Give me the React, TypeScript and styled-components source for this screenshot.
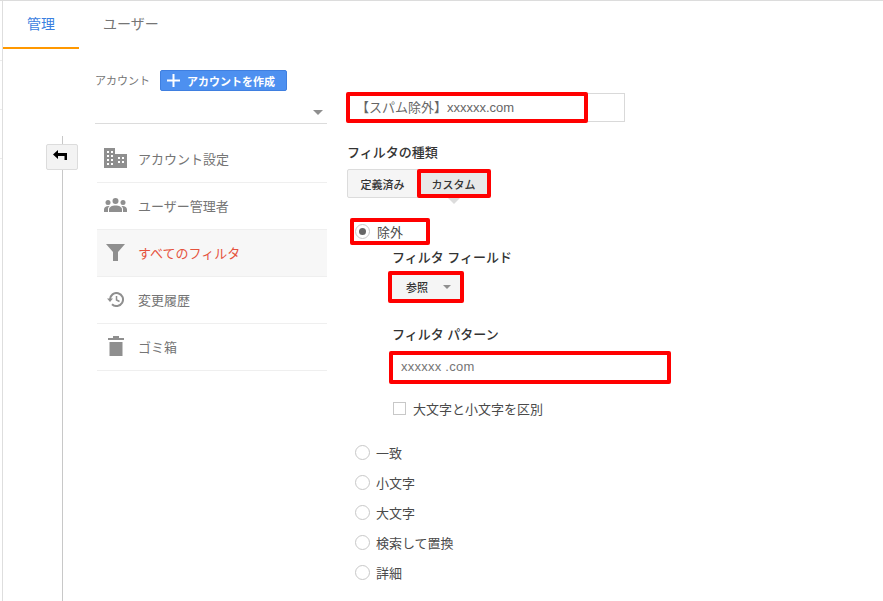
import React from 'react';
import styled, { createGlobalStyle } from 'styled-components';

const GlobalStyle = createGlobalStyle`
  html, body {
    margin: 0;
    padding: 0;
    background: #fff;
  }
  body, input, button {
    font-family: 'Liberation Sans', 'Noto Sans CJK JP', sans-serif;
  }
`;

const menuItems = [
  { label: 'アカウント設定', icon: <BuildingIcon /> },
  { label: 'ユーザー管理者', icon: <PeopleIcon /> },
  { label: 'すべてのフィルタ', icon: <FilterIcon />, active: true },
  { label: '変更履歴', icon: <HistoryIcon /> },
  { label: 'ゴミ箱', icon: <TrashIcon /> },
];

const otherTypes = ['一致', '小文字', '大文字', '検索して置換', '詳細'];

function BuildingIcon() {
  return (
    <svg width="23" height="20" viewBox="0 0 23 20">
      <path fill="#8f8f8f" fillRule="evenodd" d="M0 0h11v6h12v14H0zM3 3v2h2V3zm4 0v2h2V3zM3 7v2h2V7zm4 0v2h2V7zM3 11v2h2v-2zm4 0v2h2v-2zM3 15v2h2v-2zm4 0v2h2v-2zm7-6v2h2V9zm4 0v2h2V9zm-4 4v2h2v-2zm4 0v2h2v-2z" />
    </svg>
  );
}

function PeopleIcon() {
  return (
    <svg width="23" height="14" viewBox="0 0 23 14">
      <g fill="#8f8f8f">
        <circle cx="11.500" cy="3" r="3" />
        <circle cx="4" cy="4.500" r="2.500" />
        <circle cx="19" cy="4.500" r="2.500" />
        <path d="M5 14v-2.500C5 9 8 7.500 11.500 7.500S18 9 18 11.500V14z" />
        <path d="M0 14v-2.500C0 9.500 2 8 4.500 8c.4 0 .8 0 1.100.1C4.500 9 4 10 4 11.500V14zM23 14v-2.500C23 9.500 21 8 18.500 8c-.4 0-.8 0-1.100.1 1.100.9 1.600 1.900 1.600 3.400V14z" />
      </g>
    </svg>
  );
}

function FilterIcon() {
  return (
    <svg width="19" height="17" viewBox="0 0 19 17">
      <path fill="#8f8f8f" d="M0 0h19l-7 8v9H7V8z" />
    </svg>
  );
}

function HistoryIcon() {
  return (
    <svg width="17" height="15" viewBox="0 0 17 15">
      <path fill="none" stroke="#8f8f8f" strokeWidth="2" d="M3 7.500a6.500 6.500 0 1 1 2 4.700" />
      <path fill="#8f8f8f" d="M0 6.500h6L3 10z" />
      <path fill="none" stroke="#8f8f8f" strokeWidth="1.500" d="M9.500 4v4l3 1.500" />
    </svg>
  );
}

function TrashIcon() {
  return (
    <svg width="16" height="20" viewBox="0 0 16 20">
      <path fill="#8f8f8f" d="M0 2h5V0h6v2h5v2H0zM1.500 6h13v14h-13z" />
    </svg>
  );
}

function BackIcon() {
  return (
    <svg width="14" height="10" viewBox="0 0 14 10">
      <path fill="#000" d="M0 4.500 5 0v3h9v7h-2.500V6H5v3z" />
    </svg>
  );
}

function PlusIcon() {
  return (
    <svg width="13" height="13" viewBox="0 0 13 13">
      <path fill="#fff" d="M5.500 0h2v5.500H13v2H7.500V13h-2V7.500H0v-2h5.500z" />
    </svg>
  );
}

function App() {
  return (
    <Page>
      <GlobalStyle />
      <LeftEdge>
        <EdgeCell $height={60} />
        <EdgeCell $height={49} />
        <EdgeCell $height={49} />
      </LeftEdge>
      <Content>
        <TabBar>
          <Tab $active>管理</Tab>
          <Tab>ユーザー</Tab>
        </TabBar>
        <Body>
          <Rail>
            <RailLine $height={8} />
            <BackButton>
              <BackIcon />
            </BackButton>
            <RailLine />
          </Rail>
          <Sidebar>
            <AccountRow>
              <AccountLabel>アカウント</AccountLabel>
              <CreateButton>
                <PlusIcon />
                アカウントを作成
              </CreateButton>
            </AccountRow>
            <AccountSelect>
              <SelectArrow />
            </AccountSelect>
            <Menu>
              {menuItems.map((item) => (
                <MenuItem key={item.label} $active={item.active}>
                  <MenuIcon>{item.icon}</MenuIcon>
                  {item.label}
                </MenuItem>
              ))}
            </Menu>
          </Sidebar>
          <Form>
            <NameInput>
              【スパム除外】xxxxxx.com
              <Highlight $left={-2} $top={-2} $width={242} $height={31} />
            </NameInput>
            <SectionTitle>フィルタの種類</SectionTitle>
            <Segmented>
              <Segment>定義済み</Segment>
              <Segment $selected>
                カスタム
                <Highlight $left={-2} $top={-1} $width={74} $height={29} />
              </Segment>
            </Segmented>
            <ExcludeRow>
              <Radio $checked />
              除外
              <Highlight $left={-3} $top={-2} $width={80} $height={27} />
            </ExcludeRow>
            <SubSection>
              <FieldTitle>フィルタ フィールド</FieldTitle>
              <FieldSelect>
                参照
                <SmallArrow />
                <Highlight $left={-4} $top={-2} $width={76} $height={32} />
              </FieldSelect>
              <PatternTitle>フィルタ パターン</PatternTitle>
              <PatternInput>
                xxxxxx .com
                <Highlight $left={-4} $top={-2} $width={282} $height={33} />
              </PatternInput>
              <CheckRow>
                <Checkbox />
                大文字と小文字を区別
              </CheckRow>
            </SubSection>
            <RadioList>
              {otherTypes.map((label) => (
                <RadioRow key={label}>
                  <Radio />
                  {label}
                </RadioRow>
              ))}
            </RadioList>
          </Form>
        </Body>
      </Content>
    </Page>
  );
}

export default App;

const Page = styled.main`
  width: 883px;
  height: 601px;
  overflow: hidden;
  display: flex;
  box-sizing: border-box;
  border-top: 1px solid #dcdcdc;
  background: #fff;
`;

const LeftEdge = styled.div`
  box-sizing: border-box;
  width: 3px;
  flex-shrink: 0;
  border-right: 1px solid #dedede;
`;

const EdgeCell = styled.div<{ $height: number }>`
  box-sizing: border-box;
  height: ${(p) => p.$height}px;
  border-bottom: 1px solid #ececec;
`;

const Content = styled.div`
  flex: 1;
  min-width: 0;
  display: flex;
  flex-direction: column;
`;

const TabBar = styled.div`
  display: flex;
  height: 48px;
  flex-shrink: 0;
`;

const Tab = styled.div<{ $active?: boolean }>`
  box-sizing: border-box;
  height: 48px;
  padding: 13px 24px 0;
  font-size: 14px;
  line-height: 20px;
  color: ${(p) => (p.$active ? '#3b7fe0' : '#757575')};
  border-bottom: 2px solid ${(p) => (p.$active ? '#ff9800' : 'transparent')};
`;

const Body = styled.div`
  flex: 1;
  display: flex;
  min-height: 0;
`;

const Rail = styled.div`
  width: 92px;
  padding: 87px 0 0 43px;
  box-sizing: border-box;
  display: flex;
  flex-direction: column;
  align-items: flex-start;
`;

const RailLine = styled.div<{ $height?: number }>`
  width: 1px;
  margin-left: 16px;
  background: #c8c8c8;
  ${(p) => (p.$height ? `height: ${p.$height}px;` : 'flex: 1;')}
`;

const BackButton = styled.div`
  box-sizing: border-box;
  width: 32px;
  height: 26px;
  display: flex;
  align-items: center;
  justify-content: center;
  background: #f3f3f3;
  border: 1px solid #dcdcdc;
  border-radius: 2px;
  padding: 0 4px 4px 0;
`;

const Sidebar = styled.div`
  width: 232px;
  flex-shrink: 0;
  padding-top: 21px;
`;

const AccountRow = styled.div`
  display: flex;
  align-items: center;
  gap: 10px;
  height: 21px;
`;

const AccountLabel = styled.span`
  font-size: 11px;
  color: #757575;
  padding-bottom: 2px;
`;

const CreateButton = styled.div`
  box-sizing: border-box;
  width: 127px;
  height: 21px;
  display: flex;
  align-items: center;
  gap: 7px;
  padding-left: 6px;
  background: #4d90f0;
  border: 1px solid #3f7fe0;
  border-radius: 2px;
  color: #fff;
  font-size: 11px;
  font-weight: 700;
`;

const AccountSelect = styled.div`
  box-sizing: border-box;
  height: 33px;
  border-bottom: 1px solid #dcdcdc;
  display: flex;
  justify-content: flex-end;
  align-items: flex-end;
  padding: 0 4px 8px 0;
`;

const SelectArrow = styled.div`
  width: 0;
  height: 0;
  border-left: 5px solid transparent;
  border-right: 5px solid transparent;
  border-top: 5px solid #8f8f8f;
`;

const Menu = styled.div`
  margin: 12px 0 0 2px;
`;

const MenuItem = styled.div<{ $active?: boolean }>`
  box-sizing: border-box;
  height: 47px;
  padding-bottom: 2px;
  display: flex;
  align-items: center;
  font-size: 13px;
  color: ${(p) => (p.$active ? '#e5533d' : '#757575')};
  background: ${(p) => (p.$active ? '#f7f7f7' : 'transparent')};
  border-bottom: 1px solid #efefef;
`;

const MenuIcon = styled.span`
  width: 37px;
  margin-right: 4px;
  display: flex;
  justify-content: center;
`;

const Form = styled.div`
  flex: 1;
  padding: 44px 0 0 20px;
  font-size: 13px;
  color: #4a4a4a;
`;

const Highlight = styled.span<{ $left: number; $top: number; $width: number; $height: number }>`
  position: absolute;
  left: ${(p) => p.$left}px;
  top: ${(p) => p.$top}px;
  box-sizing: border-box;
  width: ${(p) => p.$width}px;
  height: ${(p) => p.$height}px;
  border: 4px solid #f00;
  border-radius: 2px;
  pointer-events: none;
`;

const NameInput = styled.div`
  position: relative;
  box-sizing: border-box;
  width: 278px;
  height: 29px;
  border: 1px solid #d9d9d9;
  padding-left: 8px;
  line-height: 27px;
  font-size: 13px;
  color: #666;
`;

const SectionTitle = styled.div`
  margin-top: 22px;
  font-size: 13px;
  font-weight: 500;
  line-height: 18px;
  color: #333;
`;

const Segmented = styled.div`
  display: flex;
  margin-top: 7px;
`;

const Segment = styled.div<{ $selected?: boolean }>`
  position: relative;
  box-sizing: border-box;
  height: 29px;
  width: 71px;
  display: flex;
  align-items: center;
  justify-content: center;
  font-size: 11px;
  font-weight: 500;
  color: #333;
  background: ${(p) => (p.$selected ? '#e8e8e8' : '#f5f5f5')};
  border: 1px solid #dcdcdc;
  border-radius: 2px 0 0 2px;
  ${(p) =>
    p.$selected &&
    `
    &::after {
      content: '';
      position: absolute;
      left: 29px;
      top: 28px;
      border-left: 6px solid transparent;
      border-right: 6px solid transparent;
      border-top: 6px solid #dcdcdc;
    }
  `}
`;

const ExcludeRow = styled.div`
  position: relative;
  display: flex;
  align-items: center;
  gap: 7px;
  height: 23px;
  width: 75px;
  margin: 22px 0 0 6px;
  padding-left: 2px;
`;

const Radio = styled.span<{ $checked?: boolean }>`
  box-sizing: border-box;
  width: 15px;
  height: 15px;
  flex-shrink: 0;
  border-radius: 50%;
  border: 1px solid #c8c8c8;
  display: flex;
  align-items: center;
  justify-content: center;
  &::before {
    content: '';
    width: 7px;
    height: 7px;
    border-radius: 50%;
    background: ${(p) => (p.$checked ? '#666' : 'transparent')};
  }
`;

const SubSection = styled.div`
  padding-left: 45px;
  margin-top: 6px;
`;

const FieldTitle = styled.div`
  font-size: 13px;
  font-weight: 500;
  line-height: 18px;
  color: #333;
`;

const FieldSelect = styled.div`
  position: relative;
  box-sizing: border-box;
  width: 71px;
  height: 27px;
  margin-top: 6px;
  display: flex;
  align-items: center;
  padding-left: 14px;
  gap: 15px;
  background: #f5f5f5;
  font-size: 11px;
  font-weight: 500;
  color: #333;
`;

const SmallArrow = styled.span`
  border-left: 4px solid transparent;
  border-right: 4px solid transparent;
  border-top: 4px solid #8f8f8f;
`;

const PatternTitle = styled(FieldTitle)`
  margin-top: 26px;
`;

const PatternInput = styled.div`
  position: relative;
  box-sizing: border-box;
  width: 277px;
  height: 29px;
  margin-top: 8px;
  padding-left: 8px;
  line-height: 27px;
  font-size: 13px;
  letter-spacing: 0.25px;
  color: #757575;
  border: 1px solid #d9d9d9;
`;

const CheckRow = styled.div`
  display: flex;
  align-items: center;
  gap: 7px;
  margin-top: 20px;
  margin-left: 1px;
  height: 15px;
`;

const Checkbox = styled.span`
  box-sizing: border-box;
  width: 13px;
  height: 13px;
  border: 1px solid #c8c8c8;
`;

const RadioList = styled.div`
  margin-top: 21px;
`;

const RadioRow = styled.div`
  display: flex;
  align-items: center;
  gap: 6px;
  height: 30px;
  margin-left: 8px;
`;
